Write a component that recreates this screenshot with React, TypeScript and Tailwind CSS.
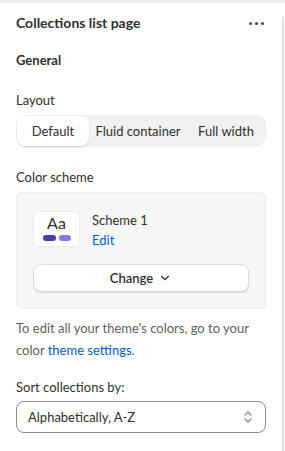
import { ChevronDown } from "lucide-react";

function App() {
  return (
    <div
      className="relative w-[285px] h-[451px] bg-white overflow-hidden text-[13px] leading-[18px] text-[#303030]"
      style={{ fontFamily: "'Segoe UI', Lato, 'Noto Sans', sans-serif" }}
    >
      {/* top edge + scroll track */}
      <div className="absolute top-0 left-0 right-0 h-[3px] bg-[#ebebeb]" />
      <div className="absolute top-[17px] bottom-0 right-[1px] w-[2px] bg-[#e3e3e3]" />

      <div className="pl-4 pr-[19px] pt-[13px]">
        <div className="flex items-center justify-between h-[20px]">
          <h1 className="text-[14px] font-bold text-[#303030]">Collections list page</h1>
          <div className="flex gap-[3px] mr-[2px]">
            <span className="w-[3px] h-[3px] rounded-full bg-[#4a4a4a]" />
            <span className="w-[3px] h-[3px] rounded-full bg-[#4a4a4a]" />
            <span className="w-[3px] h-[3px] rounded-full bg-[#4a4a4a]" />
          </div>
        </div>

        <h2 className="mt-[18px] text-[13px] font-bold">General</h2>

        <div className="mt-[22px]">Layout</div>
        <div className="mt-[6px] flex items-center h-[32px] rounded-[10px] bg-[#f1f1f1] p-[1px]">
          <div className="w-[72px] h-[30px] flex items-center justify-center bg-white rounded-[8px] shadow-[0_1px_2px_rgba(0,0,0,0.15)]">
            Default
          </div>
          <div className="flex-1 text-center">Fluid container</div>
          <div className="w-[78px] text-center">Full width</div>
        </div>

        <div className="mt-[21px]">Color scheme</div>
        <div className="mt-[6px] h-[117px] rounded-[6px] bg-[#f6f6f6] border border-[#ececec] px-4 pt-[18px]">
          <div className="flex items-start gap-[12px]">
            <div className="w-[47px] h-[36px] rounded-[4px] bg-white border border-[#ececec] flex flex-col items-center pt-[2px]">
              <span className="text-[16px] leading-[18px] text-[#303030]">Aa</span>
              <div className="flex gap-[3px] mt-[3px]">
                <span className="w-[13px] h-[6px] rounded-full bg-[#4f3aab]" />
                <span className="w-[12px] h-[6px] rounded-full bg-[#8a73ec]" />
              </div>
            </div>
            <div>
              <div>Scheme 1</div>
              <div className="mt-[2px] text-[#005bd3]">Edit</div>
            </div>
          </div>
          <button className="mt-[15px] w-full h-[28px] rounded-[8px] bg-white border border-[#dcdcdc] shadow-[0_1px_0_rgba(0,0,0,0.12)] flex items-center justify-center gap-[5px] font-semibold text-[13px]">
            Change
            <ChevronDown size={14} strokeWidth={2} />
          </button>
        </div>

        <div className="mt-[8px] leading-[22px] text-[#616161]">
          <div>To edit all your theme's colors, go to your</div>
          <div>
            color <span className="text-[#005bd3]">theme settings</span>.
          </div>
        </div>

        <div className="mt-[17px]">Sort collections by:</div>
        <div className="mt-[5px] h-[32px] rounded-[8px] border border-[#8a8a8a] flex items-center justify-between pl-[11px] pr-[12px]">
          <span>Alphabetically, A-Z</span>
          <svg width="10" height="14" viewBox="0 0 10 14" fill="none" stroke="#8a8a8a" strokeWidth="1.4" strokeLinecap="round" strokeLinejoin="round">
            <path d="M2 5 L5 2 L8 5" />
            <path d="M2 9 L5 12 L8 9" />
          </svg>
        </div>
      </div>
    </div>
  );
}

export default App;
